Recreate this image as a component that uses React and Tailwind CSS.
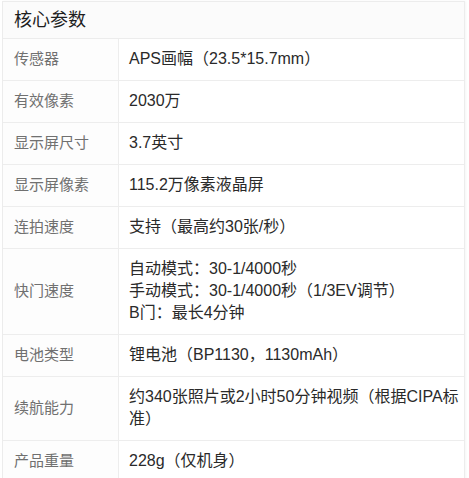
const SPECS = [
  { label: '传感器', value: ['APS画幅（23.5*15.7mm）'] },
  { label: '有效像素', value: ['2030万'] },
  { label: '显示屏尺寸', value: ['3.7英寸'] },
  { label: '显示屏像素', value: ['115.2万像素液晶屏'] },
  { label: '连拍速度', value: ['支持（最高约30张/秒）'] },
  {
    label: '快门速度',
    value: ['自动模式：30-1/4000秒', '手动模式：30-1/4000秒（1/3EV调节）', 'B门：最长4分钟'],
  },
  { label: '电池类型', value: ['锂电池（BP1130，1130mAh）'] },
  { label: '续航能力', value: ['约340张照片或2小时50分钟视频（根据CIPA标准）'] },
  { label: '产品重量', value: ['228g（仅机身）'] },
]

export default function App() {
  return (
    <div
      className="bg-white pt-[1px] pl-[2px] w-[469px] h-[478px] overflow-hidden"
      style={{ fontFamily: '"Liberation Sans", "Noto Sans CJK SC", sans-serif' }}
    >
      <div className="w-[463px] border border-[#ececec] shadow-[1px_0_2px_rgba(0,0,0,0.04)]">
        {/* Header */}
        <div className="h-[37px] flex items-center px-[11px] text-[18px] text-[#1e1e1e] border-b border-[#ececec] bg-[#fbfbfb]">
          核心参数
        </div>

        {SPECS.map((row) => (
          <div key={row.label} className="flex border-b border-[#ededed] last:border-b-0">
            <div className="w-[116px] shrink-0 flex items-center px-[11px] text-[15px] text-[#707070] border-r border-[#ededed] bg-[#fdfdfd]">
              {row.label}
            </div>
            <div className="flex-1 pt-[9px] pb-[10px] pl-[10px] pr-[4px] text-[16px] leading-[22px] text-[#2a2a2a]">
              {row.value.map((line) => (
                <div key={line}>{line}</div>
              ))}
            </div>
          </div>
        ))}
      </div>
    </div>
  )
}
